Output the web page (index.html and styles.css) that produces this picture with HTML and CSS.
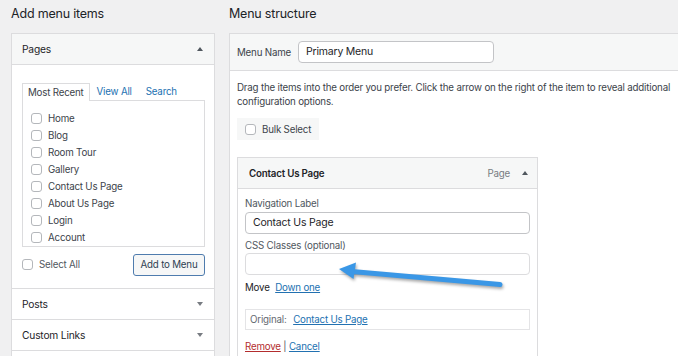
FILE: index.html
```html
<!DOCTYPE html>
<html lang="en">
<head>
  <meta charset="UTF-8">
  <meta name="viewport" content="width=device-width, initial-scale=1.0">
  <title>Menus</title>
  <link rel="stylesheet" href="styles.css">
</head>
<body>
  <div class="screen">
    <section class="col-left">
      <h2 class="col-title">Add menu items</h2>
      <div class="side-box">
        <div class="side-head open">Pages <span class="tri up"></span></div>
        <div class="side-body">
          <div class="tabs">
            <span class="tab active">Most Recent</span>
            <a class="tab">View All</a>
            <a class="tab">Search</a>
          </div>
          <ul class="tab-panel">
            <li><span class="cb"></span>Home</li>
            <li><span class="cb"></span>Blog</li>
            <li><span class="cb"></span>Room Tour</li>
            <li><span class="cb"></span>Gallery</li>
            <li><span class="cb"></span>Contact Us Page</li>
            <li><span class="cb"></span>About Us Page</li>
            <li><span class="cb"></span>Login</li>
            <li><span class="cb"></span>Account</li>
          </ul>
          <div class="add-row">
            <label class="select-all"><span class="cb"></span>Select All</label>
            <button class="btn-add">Add to Menu</button>
          </div>
        </div>
        <div class="side-head">Posts <span class="tri down"></span></div>
        <div class="side-head">Custom Links <span class="tri down"></span></div>
        <div class="side-head"></div>
      </div>
    </section>

    <section class="col-right">
      <h2 class="col-title">Menu structure</h2>
      <div class="menu-box">
        <div class="menu-head">
          <span class="menu-label">Menu Name</span>
          <div class="field menu-name">Primary Menu</div>
        </div>
        <div class="menu-body">
          <p class="desc">Drag the items into the order you prefer. Click the arrow on the right of the item to reveal additional configuration options.</p>
          <div class="bulk"><span class="cb"></span>Bulk Select</div>

          <div class="item">
            <div class="item-head">
              <span class="item-title">Contact Us Page</span>
              <span class="item-type">Page <span class="tri up"></span></span>
            </div>
            <div class="item-body">
              <div class="label">Navigation Label</div>
              <div class="field">Contact Us Page</div>
              <div class="label spaced">CSS Classes (optional)</div>
              <div class="field faded"></div>
              <div class="move">Move <a class="link">Down one</a></div>
              <div class="original">Original: <a class="link">Contact Us Page</a></div>
              <div class="actions"><a class="link danger">Remove</a> | <a class="link">Cancel</a></div>
            </div>
          </div>
        </div>
      </div>
    </section>
  </div>

  <!-- annotation arrow pointing at the CSS Classes field -->
  <svg class="pointer" width="190" height="45" viewBox="0 0 190 45">
    <line x1="22" y1="16.5" x2="170" y2="29.5" stroke="#3a97e6" stroke-width="5" stroke-linecap="round"/>
    <polygon points="9,14 26,7.5 23.5,24" fill="#3a97e6"/>
  </svg>
</body>
</html>
```

FILE: styles.css
```css
body {
  margin: 0;
  width: 678px;
  height: 356px;
  overflow: hidden;
  position: relative;
  background: #f0f0f1;
  font-family: 'Inter', 'Liberation Sans', sans-serif;
  font-size: 9.75px;
  letter-spacing: -0.2px;
  color: #2c3338;
}

.screen {
  display: flex;
  gap: 14px;
  padding-left: 11px;
}

.col-left {
  width: 204px;
  flex: none;
}

.col-right {
  width: 640px;
  flex: none;
}

.col-title {
  margin: 0 0 10px;
  padding-top: 5px;
  font-size: 12.5px;
  font-weight: 400;
  line-height: 18px;
  color: #1d2327;
}

/* left column: accordion of item sources */
.side-box {
  background: #fff;
  border: 1px solid #dcdcde;
  height: 400px;
}

.side-head {
  display: flex;
  justify-content: space-between;
  align-items: center;
  height: 30px;
  padding: 0 11px 0 10px;
  border-top: 1px solid #dcdcde;
  font-size: 10.25px;
  color: #1d2327;
}

.side-head.open {
  border-top: none;
  border-bottom: 1px solid #dcdcde;
  background: #f6f7f7;
}

.tri {
  display: inline-block;
  width: 0;
  height: 0;
  border-left: 3px solid transparent;
  border-right: 3px solid transparent;
}

.tri.up {
  border-bottom: 4px solid #50575e;
}

.tri.down {
  border-top: 4px solid #787c82;
}

.side-body {
  padding: 18px 9px 12px 10px;
}

.tabs {
  display: flex;
  align-items: flex-end;
}

.tab {
  padding: 0 7px;
  line-height: 16px;
  color: #2271b1;
}

.tab.active {
  position: relative;
  z-index: 1;
  padding: 0 5px;
  margin-bottom: -1px;
  border: 1px solid #dcdcde;
  border-bottom: none;
  background: #fff;
  color: #3c434a;
  line-height: 17px;
}

.tab-panel {
  list-style: none;
  margin: 0;
  padding: 9.5px 8px 0;
  border: 1px solid #dcdcde;
}

.tab-panel li {
  display: flex;
  align-items: center;
  height: 16.9px;
  color: #3c434a;
}

.cb {
  display: inline-block;
  box-sizing: border-box;
  width: 11px;
  height: 11px;
  margin-right: 6px;
  border: 1px solid #b4b7bb;
  border-radius: 3px;
  background: #fff;
  flex: none;
}

.add-row {
  display: flex;
  justify-content: space-between;
  align-items: center;
  margin-top: 7px;
}

.select-all {
  display: flex;
  align-items: center;
  color: #50575e;
}

.btn-add {
  width: 72px;
  height: 22px;
  padding: 0;
  border: 1px solid #4f7cae;
  border-radius: 3px;
  background: #f6f7f7;
  font-family: inherit;
  font-size: 9.75px;
  letter-spacing: -0.2px;
  color: #2f3f52;
}

/* right column: menu editor */
.menu-box {
  background: #fff;
  border: 1px solid #dcdcde;
  border-right: none;
  height: 400px;
}

.menu-head {
  display: flex;
  align-items: center;
  height: 36px;
  padding-left: 7px;
  border-bottom: 1px solid #dcdcde;
  background: #f6f7f7;
}

.menu-label {
  width: 61px;
  color: #3c434a;
}

.field {
  box-sizing: border-box;
  height: 22px;
  padding: 0 7px;
  border: 1px solid #c3c4c7;
  border-radius: 4px;
  background: #fff;
  font-size: 10.5px;
  line-height: 20px;
  color: #1d2327;
}

.menu-name {
  width: 196px;
}

.menu-body {
  padding: 10px 7px;
}

.desc {
  margin: 0;
  width: 440px;
  line-height: 14px;
  color: #3c434a;
}

.bulk {
  display: inline-flex;
  align-items: center;
  height: 22px;
  margin-top: 9px;
  padding: 0 8px;
  background: #f6f7f7;
  color: #3c434a;
}

.item {
  width: 299px;
  margin-top: 17px;
  border: 1px solid #dcdcde;
  height: 220px;
}

.item-head {
  display: flex;
  justify-content: space-between;
  align-items: center;
  height: 30px;
  padding: 0 9px 0 11px;
  border-bottom: 1px solid #dcdcde;
  background: #f6f7f7;
}

.item-title {
  font-weight: 600;
  color: #1d2327;
}

.item-type {
  display: flex;
  align-items: center;
  gap: 12px;
  color: #787c82;
}

.item-body {
  padding: 8px 7px 0;
}

.label {
  line-height: 14px;
  margin-bottom: 1px;
  color: #50575e;
}

.label.spaced {
  margin-top: 5px;
  margin-bottom: 0;
}

.field.faded {
  border-color: #dcdcde;
}

.move {
  margin-top: 6px;
  line-height: 14px;
  color: #1d2327;
}

.link {
  color: #2271b1;
  text-decoration: underline;
}

.move .link {
  margin-left: 3px;
}

.original {
  box-sizing: border-box;
  height: 21px;
  margin-top: 14px;
  padding-left: 4px;
  border: 1px solid #e4e4e6;
  line-height: 19px;
  color: #646970;
}

.original .link {
  margin-left: 4px;
}

.actions {
  margin-top: 10px;
  line-height: 14px;
  color: #50575e;
}

.link.danger {
  color: #b32d2e;
}

.pointer {
  position: absolute;
  left: 330px;
  top: 255px;
  filter: drop-shadow(1px 2px 1.5px rgba(0, 0, 0, 0.35));
}
```
